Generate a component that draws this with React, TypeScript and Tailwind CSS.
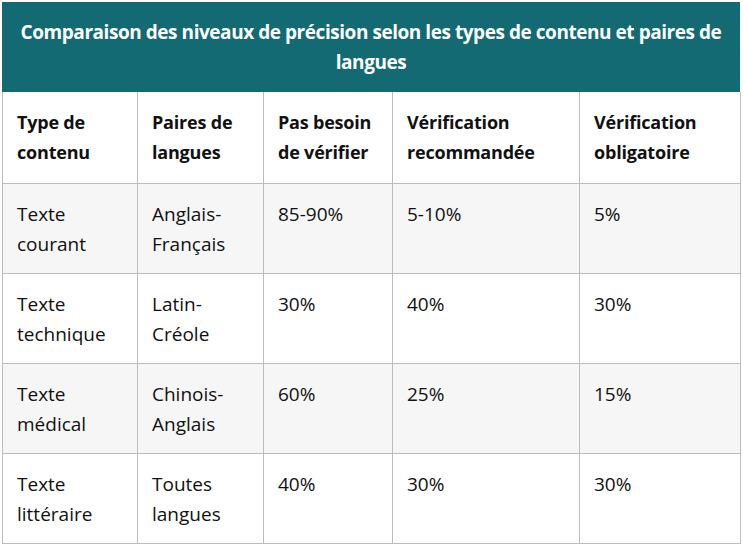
import React from 'react';

interface Row {
  type: string[];
  pair: string[];
  none: string;
  recommended: string;
  required: string;
}

const rows: Row[] = [
  { type: ['Texte', 'courant'], pair: ['Anglais-', 'Français'], none: '85-90%', recommended: '5-10%', required: '5%' },
  { type: ['Texte', 'technique'], pair: ['Latin-', 'Créole'], none: '30%', recommended: '40%', required: '30%' },
  { type: ['Texte', 'médical'], pair: ['Chinois-', 'Anglais'], none: '60%', recommended: '25%', required: '15%' },
  { type: ['Texte', 'littéraire'], pair: ['Toutes', 'langues'], none: '40%', recommended: '30%', required: '30%' },
];

const headers = [
  ['Type de', 'contenu'],
  ['Paires de', 'langues'],
  ['Pas besoin', 'de vérifier'],
  ['Vérification', 'recommandée'],
  ['Vérification', 'obligatoire'],
];

const widths = ['w-[135px]', 'w-[126px]', 'w-[129px]', 'w-[187px]', 'w-[161px]'];

const Lines: React.FC<{ lines: string[] }> = ({ lines }) => (
  <>
    {lines.map((l, i) => (
      <div key={i}>{l}</div>
    ))}
  </>
);

const App: React.FC = () => {
  return (
    <div className="w-[743px] h-[548px] bg-white pt-[2px] pl-[2px]" style={{ fontFamily: '"Open Sans", "Noto Sans", sans-serif' }}>
      <div className="w-[738px]">
        {/* Title bar */}
        <div className="bg-[#136a72] h-[90px] flex items-center justify-center px-3 text-center text-white font-bold text-[19px] leading-[30px] tracking-[-0.45px]">
          Comparaison des niveaux de précision selon les types de contenu et paires de langues
        </div>

        <table className="table-fixed border-collapse w-[738px] text-[19px] leading-[30px] text-[#111]">
          <colgroup>
            {widths.map((w, i) => (
              <col key={i} className={w} />
            ))}
          </colgroup>
          <thead>
            <tr className="bg-white">
              {headers.map((h, i) => (
                <th key={i} className="border border-[#bdbdbd] border-t-0 text-left align-top font-bold text-[18px] px-[14px] pt-[15px] pb-[15px] h-[91px] tracking-[-0.2px]">
                  <Lines lines={h} />
                </th>
              ))}
            </tr>
          </thead>
          <tbody>
            {rows.map((r, i) => (
              <tr key={i} className={i % 2 === 0 ? 'bg-[#f6f6f6]' : 'bg-white'}>
                <td className={`border border-[#bdbdbd] align-top px-[14px] pt-[15px] pb-[14px] ${i === 0 ? 'h-[90px]' : 'h-[89px]'}`}>
                  <Lines lines={r.type} />
                </td>
                <td className="border border-[#bdbdbd] align-top px-[14px] pt-[15px] pb-[14px]">
                  <Lines lines={r.pair} />
                </td>
                <td className="border border-[#bdbdbd] align-top px-[14px] pt-[15px] pb-[14px]">{r.none}</td>
                <td className="border border-[#bdbdbd] align-top px-[14px] pt-[15px] pb-[14px]">{r.recommended}</td>
                <td className="border border-[#bdbdbd] align-top px-[14px] pt-[15px] pb-[14px]">{r.required}</td>
              </tr>
            ))}
          </tbody>
        </table>
      </div>
    </div>
  );
};

export default App;
